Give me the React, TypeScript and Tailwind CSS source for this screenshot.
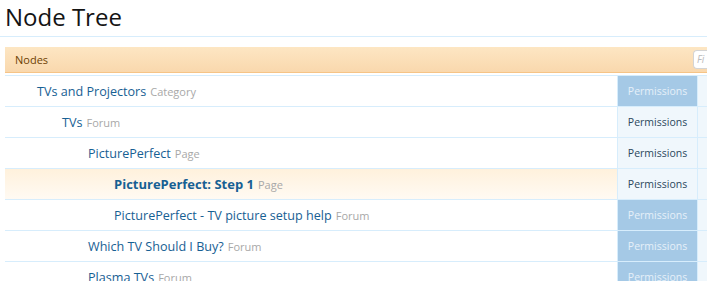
import React from "react";

type NodeRow = {
  title: string;
  type: string;
  depth: number;
  custom: boolean;
  current?: boolean;
};

const nodes: NodeRow[] = [
  { title: "TVs and Projectors", type: "Category", depth: 0, custom: true },
  { title: "TVs", type: "Forum", depth: 1, custom: false },
  { title: "PicturePerfect", type: "Page", depth: 2, custom: false },
  { title: "PicturePerfect: Step 1", type: "Page", depth: 3, custom: false, current: true },
  { title: "PicturePerfect - TV picture setup help", type: "Forum", depth: 3, custom: true },
  { title: "Which TV Should I Buy?", type: "Forum", depth: 2, custom: true },
  { title: "Plasma TVs", type: "Forum", depth: 2, custom: true },
];

const indents = ["pl-[32px]", "pl-[57px]", "pl-[83px]", "pl-[109px]"];

const Row: React.FC<{ node: NodeRow }> = ({ node }) => (
  <div
    className={`flex h-[31px] border-b border-[#d7edfc] ${
      node.current ? "bg-gradient-to-b from-[#fff1dc] to-[#fffaf3]" : "bg-white"
    }`}
  >
    <div className={`flex-1 flex items-center pt-[2px] ${indents[node.depth]}`}>
      <span
        className={`text-[#176093] ${node.current ? "font-bold text-[13px]" : "text-[12.6px]"}`}
      >
        {node.title}
      </span>
      <span className="ml-[4px] text-[11px] text-[#a8a8a8]">{node.type}</span>
    </div>
    <div
      className={`w-[80px] flex items-center justify-center pt-[2px] border-l border-[#d7edfc] text-[10.5px] ${
        node.custom ? "bg-[#a5c9e6] text-[#e6f0f9]" : "bg-[#f0f7fc] text-[#2b485c]"
      }`}
    >
      Permissions
    </div>
    <div className="w-[10px] bg-[#f0f7fc] border-l border-[#d7edfc]" />
  </div>
);

export default function App() {
  return (
    <div className="w-[707px] h-[281px] overflow-hidden bg-white font-['Open_Sans',sans-serif]">
      <h1 className="pl-[5px] pt-[1px] h-[37px] text-[24px] leading-[32px] text-[#141414] border-b border-[#d7edfc]">
        Node Tree
      </h1>
      <div className="pl-[5px] pt-[10px]">
        <div className="h-[26px] flex items-center justify-between bg-gradient-to-b from-[#fde6c3] to-[#f9d8ad] border-b border-[#f6c487]">
          <span className="pl-[10px] pt-[1px] text-[11px] text-[#6d3f03]">Nodes</span>
          <div className="w-[14px] h-[19px] bg-white border border-[#d4d4d4] rounded-l-[4px] border-r-0 text-[10px] italic text-[#bbbbbb] pl-[3px] leading-[17px] overflow-hidden">
            Fi
          </div>
        </div>
        <div className="h-[3px] border-b border-[#d7edfc]" />
        {nodes.map((n) => (
          <Row key={n.title} node={n} />
        ))}
      </div>
    </div>
  );
}
